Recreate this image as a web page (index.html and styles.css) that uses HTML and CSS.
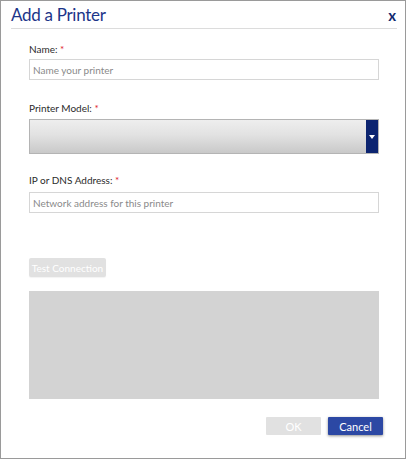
FILE: index.html
```html
<!DOCTYPE html>
<html lang="en">
<head>
  <meta charset="UTF-8">
  <meta name="viewport" content="width=device-width, initial-scale=1.0">
  <title>Add a Printer</title>
  <link rel="stylesheet" href="styles.css">
</head>
<body>
  <div class="dialog">
    <div class="header">
      <h3 class="title">Add a Printer</h3>
      <span class="close">x</span>
    </div>

    <div class="form">
      <label class="label label-name" for="name">Name: <span class="req">*</span></label>
      <input type="text" id="name" class="form-control" placeholder="Name your printer" />

      <label class="label label-model">Printer Model: <span class="req">*</span></label>
      <div class="select">
        <div class="select-value"></div>
        <div class="select-arrow">
          <svg width="6" height="4" viewBox="0 0 6 4"><path d="M0 0H6L3 4Z" fill="#fff"/></svg>
        </div>
      </div>

      <label class="label label-address" for="address">IP or DNS Address: <span class="req">*</span></label>
      <input type="text" id="address" class="form-control" placeholder="Network address for this printer" />

      <div>
        <button class="button-test" disabled>Test Connection</button>
      </div>

      <div class="results"></div>

      <div class="footer">
        <button class="button button-ok" disabled>OK</button>
        <button class="button button-cancel">Cancel</button>
      </div>
    </div>
  </div>
</body>
</html>
```

FILE: styles.css
```css
body {
  margin: 0;
  padding: 0;
  font-family: Lato, "Open Sans", sans-serif;
  background-color: white;
}
.dialog {
  width: 406px;
  height: 459px;
  box-sizing: border-box;
  border: 1px solid #9a9a9a;
  background-color: white;
  display: flex;
  flex-direction: column;
}
.header {
  display: flex;
  justify-content: space-between;
  align-items: center;
  height: 27px;
  margin: 0 8px 0 10px;
  border-bottom: 1px solid #dcdcdc;
}
.title {
  margin: 0;
  font-size: 17px;
  font-weight: normal;
  letter-spacing: -0.3px;
  color: #1c3589;
  line-height: 27px;
}
.close {
  font-size: 15px;
  font-weight: bold;
  color: #13296f;
  margin-right: 1px;
}
.form {
  display: flex;
  flex-direction: column;
  padding: 0 22px 0 28px;
}
.label {
  display: block;
  font-size: 10px;
  line-height: 12px;
  color: #2b2b2b;
}
.label-name {
  margin-top: 14px;
}
.label-model {
  margin-top: 22px;
}
.label-address {
  margin-top: 20px;
}
.req {
  color: #e0202a;
}
.form-control {
  width: 350px;
  height: 21px;
  margin-top: 4px;
  padding: 0 3px;
  border: 1px solid #d6d6d6;
  box-sizing: border-box;
  font-family: inherit;
  font-size: 10px;
  color: #333;
}
#address {
  margin-top: 6px;
}
.form-control::placeholder {
  color: #8a8a8a;
}
.select {
  display: flex;
  width: 350px;
  height: 35px;
  margin-top: 5px;
  box-sizing: border-box;
  border: 1px solid #b4b4b4;
}
.select-value {
  flex: 1;
  background: linear-gradient(#eeeeee, #e2e2e2 45%, #c9c9c9);
}
.select-arrow {
  width: 12px;
  background-color: #0c2470;
  display: flex;
  align-items: center;
  justify-content: center;
}
.button-test {
  margin-top: 45px;
  height: 19px;
  width: 77px;
  padding: 0;
  border: none;
  border-radius: 2px;
  background-color: #e1e1e1;
  color: white;
  font-family: inherit;
  font-size: 10px;
  white-space: nowrap;
  box-shadow: 0px 1px 1px rgba(0, 0, 0, 0.05);
}
.results {
  width: 350px;
  height: 108px;
  margin-top: 14px;
  background-color: #d3d3d3;
}
.footer {
  display: flex;
  justify-content: flex-end;
  gap: 7px;
  margin-top: 18px;
}
.button {
  width: 55px;
  height: 18px;
  padding: 0;
  border: none;
  border-radius: 1px;
  font-family: inherit;
  font-size: 11px;
}
.button-ok {
  background-color: #e1e1e1;
  color: white;
}
.button-cancel {
  background-color: #2c48a4;
  color: white;
  box-shadow: 0px 1px 3px rgba(0, 0, 0, 0.45);
}
```
